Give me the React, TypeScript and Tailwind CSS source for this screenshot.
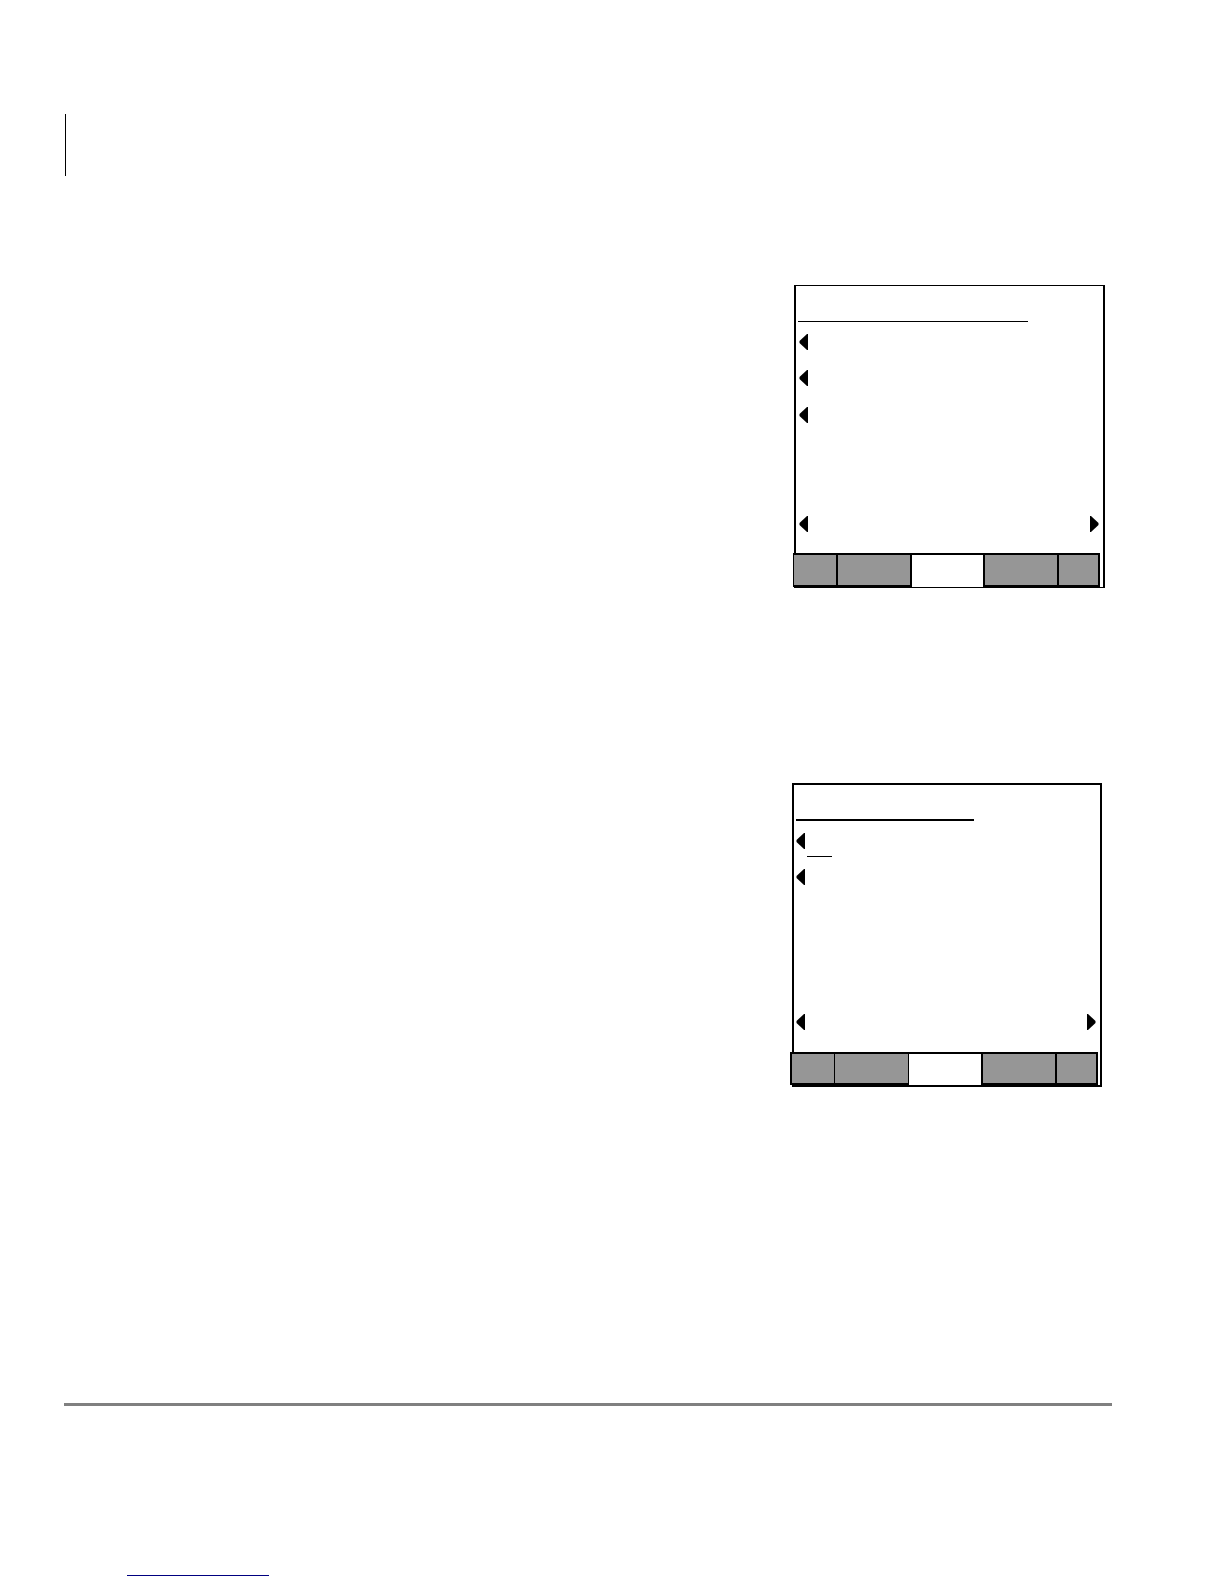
import clsx from "clsx";

type ArrowProps = {
  label: string;
  direction?: "left" | "right";
  className?: string;
};

function Arrow({ label, direction = "left", className }: ArrowProps) {
  return (
    <button type="button" aria-label={label} className={clsx("block h-4 w-[9px]", className)}>
      <svg viewBox="0 0 9 16" className="block h-4 w-[9px]">
        <path d={direction === "left" ? "M9 0H8L0.5 7V9L8 16H9Z" : "M0 0H1L8.5 7V9L1 16H0Z"} fill="#000" />
      </svg>
    </button>
  );
}

function Tabs({ tabs }: { tabs: string[] }) {
  return (
    <div className="flex">
      {tabs.map((tab, i) => (
        <button key={i} type="button" aria-label={`Soft key ${i + 1}`} className={tab} />
      ))}
    </div>
  );
}

const callTabs = [
  "h-[34px] w-[43px] border-y-2 border-l border-black bg-[#969696]",
  "h-[34px] w-[76px] border-2 border-black bg-[#969696]",
  "h-[34px] w-[71px] border-t-2 border-black bg-white",
  "h-[34px] w-[74px] border-y-2 border-l-2 border-black bg-[#969696]",
  "h-[34px] w-[43px] border-2 border-black bg-[#969696]",
];

const editTabs = [
  "h-[33px] w-[44px] border-y-2 border-l-2 border-black bg-[#969696]",
  "h-[33px] w-[75px] border-x border-y-2 border-black bg-[#969696]",
  "h-[33px] w-[72px] border-t-2 border-black bg-white",
  "h-[33px] w-[74px] border-y-2 border-l-2 border-black bg-[#969696]",
  "h-[33px] w-[43px] border-2 border-black bg-[#969696]",
];

export default function App() {
  return (
    <div className="bg-white pb-2 pl-16 pr-28 pt-[114px]">
      <div className="ml-px h-[62px] border-l border-black" />

      <main className="flex flex-col pt-[109px]">
        <section className="mr-[7px] w-[311px] self-end border-x-2 border-b border-t border-black">
          <div className="px-[3px] pt-[35px]">
            <div className="mx-[-1px] w-[230px] border-t border-black" />
            <div className="pt-3">
              <Arrow label="Option 1" />
              <Arrow label="Option 2" className="mt-5" />
              <Arrow label="Option 3" className="mt-[21px]" />
            </div>
            <div className="mt-[93px] flex justify-between pr-px">
              <Arrow label="Back" />
              <Arrow label="Next" direction="right" />
            </div>
          </div>
          <div className="-ml-[3px] mt-[21px]">
            <Tabs tabs={callTabs} />
          </div>
        </section>

        <section className="mr-[10px] mt-[195px] w-[310px] self-end border-2 border-black">
          <div className="px-[2px] pt-[34px]">
            <div className="w-[178px] border-t-2 border-black" />
            <div className="pt-3">
              <Arrow label="Option 1" />
              <div className="ml-[11px] mt-[7px] w-[25px] border-t border-black" />
              <Arrow label="Option 2" className="mt-3" />
            </div>
            <div className="mt-[129px] flex justify-between pr-[2px]">
              <Arrow label="Back" />
              <Arrow label="Next" direction="right" />
            </div>
          </div>
          <div className="-ml-1 mt-[22px]">
            <Tabs tabs={editTabs} />
          </div>
        </section>
      </main>

      <footer className="pt-[316px]">
        <hr className="border-0 border-t-[3px] border-[#808080]" />
        <a href="#" aria-label="Website" className="ml-[63px] mt-[150px] block h-5 w-[142px] border-b border-[#000080]" />
      </footer>
    </div>
  );
}
